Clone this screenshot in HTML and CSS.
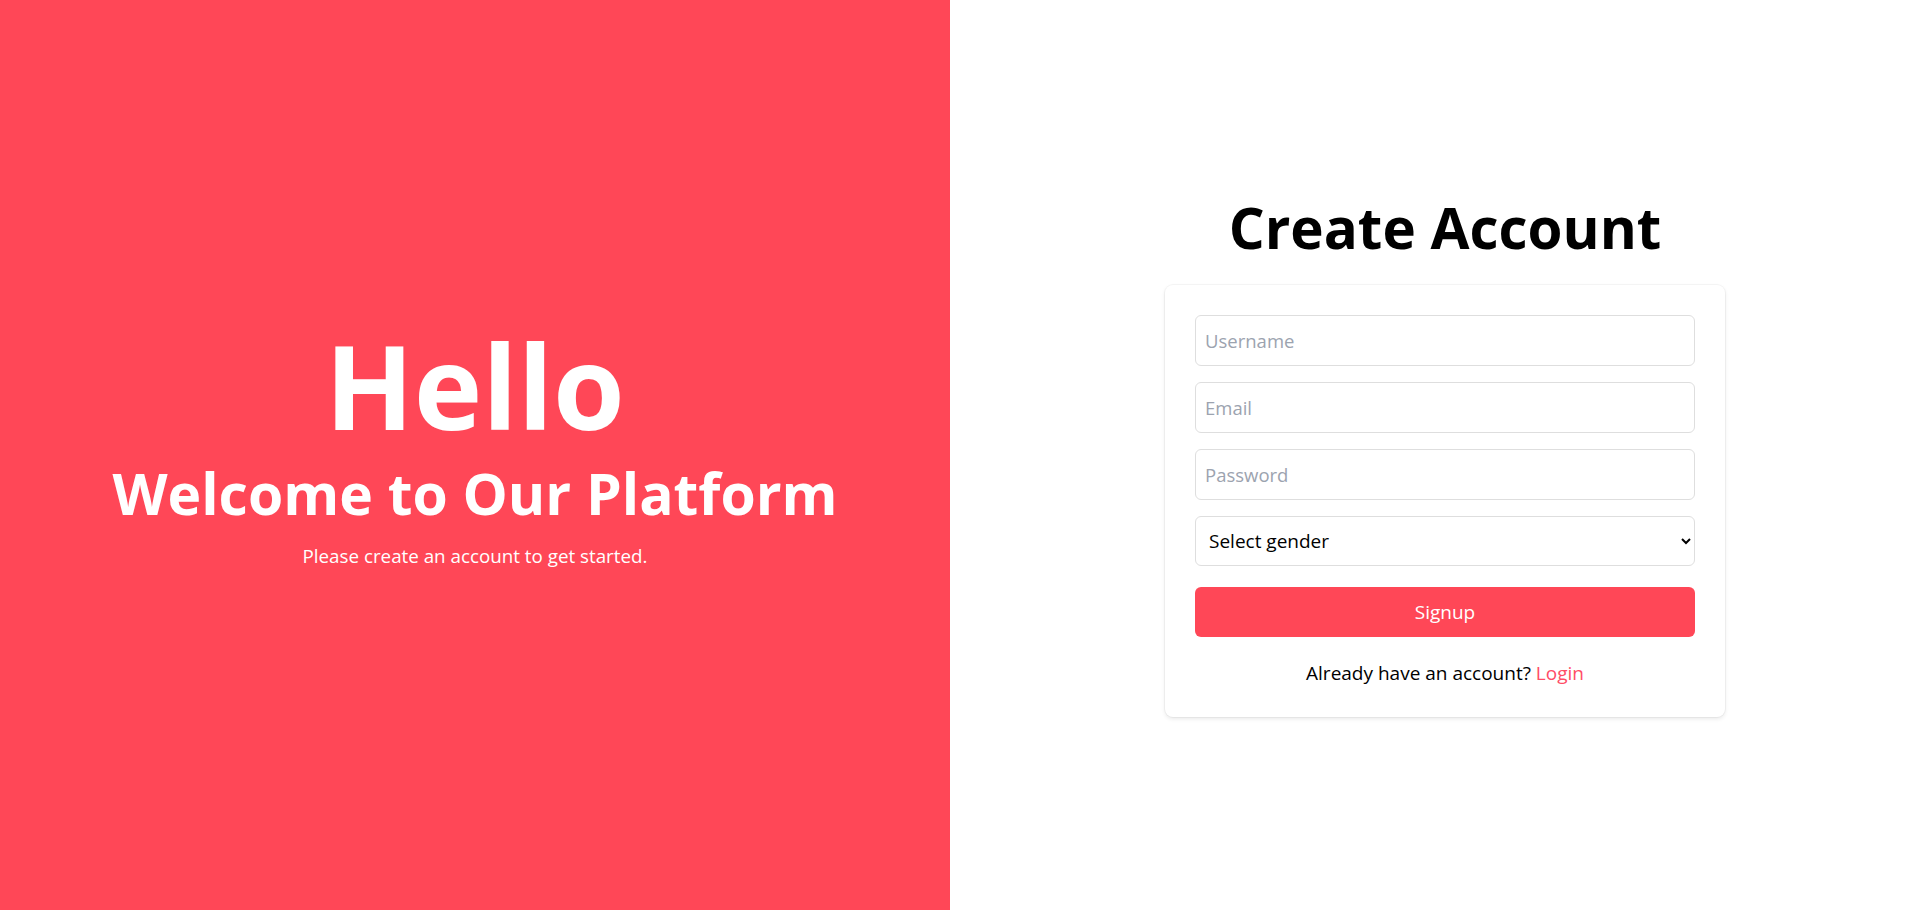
FILE: index.html
```html
<!DOCTYPE html>
<html lang="en">
<head>
<meta charset="utf-8">
<title>Create Account</title>
<link rel="stylesheet" href="styles.css">
</head>
<body>
<div class="page">
  <section class="hero">
    <h1 class="hero-title">Hello</h1>
    <h2 class="hero-sub">Welcome to Our Platform</h2>
    <p class="hero-text">Please create an account to get started.</p>
  </section>
  <section class="side">
    <h1 class="form-title">Create Account</h1>
    <form class="card">
      <input class="field" type="text" placeholder="Username">
      <input class="field" type="email" placeholder="Email">
      <input class="field" type="password" placeholder="Password">
      <select class="field select">
        <option>Select gender</option>
        <option>Male</option>
        <option>Female</option>
      </select>
      <button class="btn" type="button">Signup</button>
      <p class="switch">Already have an account? <a class="link" href="#">Login</a></p>
    </form>
  </section>
</div>
</body>
</html>
```

FILE: styles.css
```css
* { box-sizing: border-box; }
html, body { margin: 0; padding: 0; }
body {
  font-family: "Open Sans", "Noto Sans", sans-serif;
  color: #000;
  background: #fff;
}
.page {
  display: flex;
  height: 910px;
}
.hero {
  width: 950px;
  flex: 0 0 950px;
  background: #ff4757;
  color: #fff;
  display: flex;
  flex-direction: column;
  align-items: center;
  justify-content: center;
  text-align: center;
  padding-bottom: 12px;
}
.hero-title {
  margin: 0;
  font-size: 116px;
  line-height: 1;
  font-weight: 700;
}
.hero-sub {
  margin: 22px 0 0;
  font-size: 57px;
  line-height: 1;
  font-weight: 700;
}
.hero-text {
  margin: 20px 0 0;
  font-size: 18.8px;
  line-height: 1.5;
}
.side {
  flex: 1;
  display: flex;
  flex-direction: column;
  align-items: center;
  justify-content: center;
  padding-left: 22px;
  padding-top: 7px;
}
.form-title {
  margin: 0 0 28px;
  font-size: 56.5px;
  line-height: 1;
  font-weight: 700;
}
.card {
  width: 560px;
  padding: 30px;
  background: #fff;
  border-radius: 8px;
  box-shadow: 0 0 0 1px rgba(0,0,0,0.035), 0 2px 4px rgba(0,0,0,0.09);
  display: flex;
  flex-direction: column;
}
.field {
  width: 100%;
  height: 51px;
  margin: 0 0 16px;
  padding: 0 9px;
  border: 1px solid #dedede;
  border-radius: 6px;
  font-family: inherit;
  font-size: 18.5px;
  color: #000;
  background: #fff;
  outline: none;
}
.field::placeholder { color: #9ca3af; }
.select {
  height: 50px;
  margin-bottom: 0;
  font-size: 19px;
}
.btn {
  margin-top: 21px;
  height: 50px;
  border: none;
  border-radius: 6px;
  background: #ff4757;
  color: #fff;
  font-family: inherit;
  font-size: 19px;
  cursor: pointer;
}
.switch {
  margin: 22px 0 0;
  text-align: center;
  font-size: 19px;
  line-height: 1.5;
}
.link {
  color: #ff4d66;
  text-decoration: none;
}
```
